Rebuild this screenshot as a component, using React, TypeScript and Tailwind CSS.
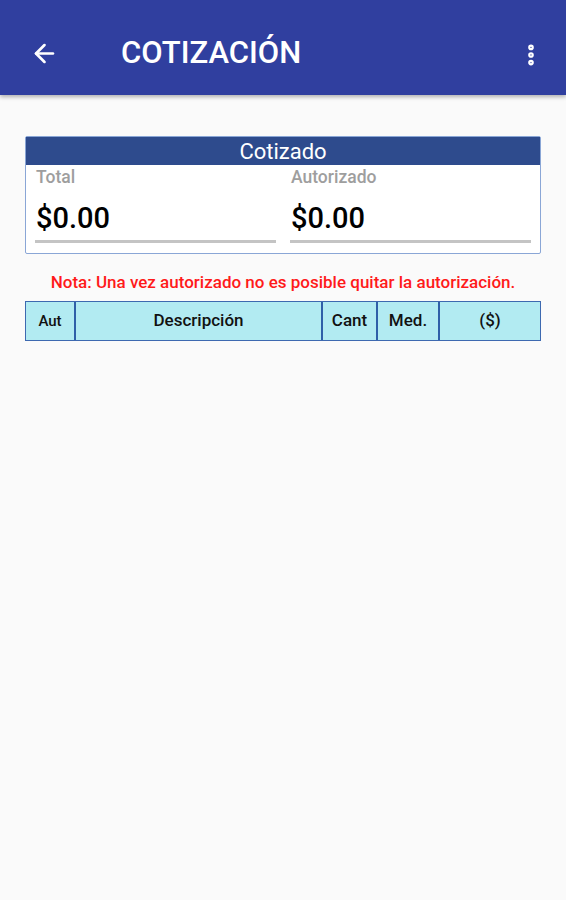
import { ArrowLeft, EllipsisVertical } from "lucide-react"

const columns = [
  { label: "Aut", w: "w-[48px]", size: "text-[15px]" },
  { label: "Descripción", w: "flex-1", size: "text-[17px]" },
  { label: "Cant", w: "w-[55px]", size: "text-[17px]" },
  { label: "Med.", w: "w-[62px]", size: "text-[17px]" },
  { label: "($)", w: "w-[102px]", size: "text-[17px]" },
]

export default function App() {
  return (
    <div className="w-[566px] h-[900px] bg-[#fafafa] flex flex-col font-['Roboto',sans-serif]">
      {/* App bar */}
      <div className="h-[95px] bg-[#303f9f] shadow-[0_2px_4px_rgba(0,0,0,0.3)] flex items-end pb-[27px] text-white">
        <ArrowLeft className="ml-[30px] w-[29px] h-[29px]" strokeWidth={2.2} />
        <h1 className="ml-[62px] text-[31px] font-medium leading-none">COTIZACIÓN</h1>
        <EllipsisVertical className="ml-auto mr-[22px] w-[26px] h-[26px]" strokeWidth={3.2} />
      </div>

      <div className="px-[25px] pt-[41px]">
        {/* Resumen */}
        <div className="border border-[#8aa6d6] rounded-[2px] bg-white">
          <div className="h-[28px] bg-[#2e4b8d] text-white text-[22px] leading-[30px] text-center">Cotizado</div>
          <div className="flex gap-[14px] px-[9px] pb-[10px]">
            {["Total", "Autorizado"].map((l) => (
              <div key={l} className="flex-1">
                <div className="text-[17.5px] font-medium text-[#9e9e9e] leading-[24px] pl-[1px]">{l}</div>
                <div className="text-[29px] font-medium text-black leading-[36px] mt-[11px] pl-[1px]">$0.00</div>
                <div className="h-[3px] bg-[#c4c4c4] mt-[4px]" />
              </div>
            ))}
          </div>
        </div>

        <p className="text-center text-[17px] font-medium text-[#ff1a1a] mt-[17px] leading-[22px]">
          Nota: Una vez autorizado no es posible quitar la autorización.
        </p>

        {/* Tabla */}
        <div className="flex h-[40px] mt-[8px] border border-[#3d69b0] bg-[#b2ebf2]">
          {columns.map((c, i) => (
            <div
              key={c.label}
              className={`${c.w} ${c.size} ${i > 0 ? "border-l-2 border-[#2f5fa8]" : ""} flex items-center justify-center font-medium text-[#111]`}
            >
              {c.label}
            </div>
          ))}
        </div>
      </div>
    </div>
  )
}
